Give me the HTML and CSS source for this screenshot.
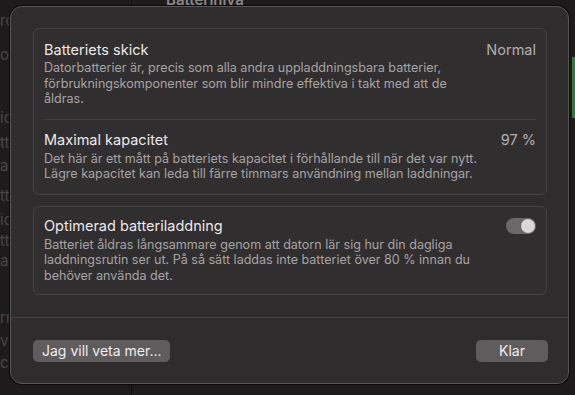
FILE: index.html
```html
<!DOCTYPE html>
<html lang="sv">
  <head>
    <meta charset="UTF-8" />
    <meta name="viewport" content="width=device-width, initial-scale=1.0" />
    <title>Batterihälsa</title>
    <link rel="stylesheet" href="styles.css">
  </head>
  <body>
    <div class="backdrop">
      <aside class="sidebar">
        <span style="top: 11px">rc</span>
        <span style="top: 45px">o</span>
        <span style="top: 108px">ic</span>
        <span style="top: 133px">tt</span>
        <span style="top: 156px">a</span>
        <span style="top: 186px">tt</span>
        <span style="top: 210px">ic</span>
        <span style="top: 231px">tt</span>
        <span style="top: 251px">a</span>
        <span style="top: 308px">rn</span>
        <span style="top: 331px">v</span>
        <span style="top: 353px">ce</span>
      </aside>
      <div class="content">
        <div class="content-title">Batterinivå</div>
        <div class="level-bar"></div>
      </div>
    </div>

    <div class="sheet">
      <div class="sheet-body">
        <section class="card">
          <div class="row">
            <div class="row-head">
              <span class="row-title">Batteriets skick</span>
              <span class="row-value">Normal</span>
            </div>
            <p class="row-text">Datorbatterier är, precis som alla andra uppladdningsbara batterier, förbrukningskomponenter som blir mindre effektiva i takt med att de åldras.</p>
          </div>
          <div class="row">
            <div class="row-head">
              <span class="row-title">Maximal kapacitet</span>
              <span class="row-value">97 %</span>
            </div>
            <p class="row-text">Det här är ett mått på batteriets kapacitet i förhållande till när det var nytt. Lägre kapacitet kan leda till färre timmars användning mellan laddningar.</p>
          </div>
        </section>

        <section class="card">
          <div class="row">
            <div class="row-head">
              <span class="row-title">Optimerad batteriladdning</span>
              <span class="toggle on"><span class="knob"></span></span>
            </div>
            <p class="row-text">Batteriet åldras långsammare genom att datorn lär sig hur din dagliga laddningsrutin ser ut. På så sätt laddas inte batteriet över 80 % innan du behöver använda det.</p>
          </div>
        </section>
      </div>

      <footer class="sheet-footer">
        <button class="btn">Jag vill veta mer...</button>
        <button class="btn btn-wide">Klar</button>
      </footer>
    </div>
  </body>
</html>
```

FILE: styles.css
```css
html,
body {
  margin: 0;
  padding: 0;
  height: 100%;
}

body {
  background-color: #1d1b1c;
  color: #e6e4e5;
  font-family: Inter, "Noto Sans", sans-serif;
  overflow: hidden;
  position: relative;
}

/* Fönstret bakom arket */
.backdrop {
  display: flex;
  height: 100%;
}

.sidebar {
  width: 131px;
  border-right: 1px solid #0e0d0d;
  position: relative;
  font-size: 15px;
  color: #4a4748;
}

.sidebar span {
  position: absolute;
  left: 0;
}

.content {
  flex: 1;
  position: relative;
}

.content-title {
  margin: -10px 0 0 34px;
  font-size: 15px;
  font-weight: 600;
  color: #8a8788;
}

.level-bar {
  position: absolute;
  right: 0;
  top: 57px;
  width: 3px;
  height: 61px;
  background-color: #2f7a3a;
}

/* Arket */
.sheet {
  position: absolute;
  left: 10px;
  top: 6px;
  width: 557px;
  height: 376px;
  background-color: #2f2c2d;
  border: 1px solid #5a5758;
  border-radius: 12px;
  box-shadow: 0 0 0 1px #0b0a0a;
  display: flex;
  flex-direction: column;
}

.sheet-body {
  padding: 21px 21px 22px 22px;
  display: flex;
  flex-direction: column;
  gap: 11px;
  border-bottom: 1px solid #444142;
}

.card {
  border: 1px solid #454243;
  border-radius: 6px;
  background-color: #312e2f;
  padding: 0 10px;
}

.row {
  padding: 10px 0 12px;
}

.row + .row {
  border-top: 1px solid #444142;
}

.card:last-child .row {
  padding: 9px 0 11px;
}

.row-head {
  display: flex;
  justify-content: space-between;
  align-items: center;
  height: 20px;
}

.row-title {
  font-size: 14.5px;
  color: #ebe9ea;
}

.row-value {
  font-size: 14.5px;
  color: #b3b0b1;
}

.row-text {
  margin: 1px 0 0;
  max-width: 440px;
  font-size: 12.55px;
  line-height: 15.5px;
  color: #a7a4a5;
}

/* Reglage */
.toggle {
  width: 30px;
  height: 16px;
  border-radius: 8px;
  background-color: #6b6869;
  display: flex;
  align-items: center;
  justify-content: flex-end;
  padding: 0 1px;
  box-sizing: border-box;
}

.knob {
  width: 14px;
  height: 14px;
  border-radius: 50%;
  background-color: #d9d7d8;
}

/* Knappar */
.sheet-footer {
  flex: 1;
  display: flex;
  justify-content: space-between;
  align-items: center;
  padding: 0 20px 0 22px;
}

.btn {
  height: 22px;
  padding: 0 9px;
  font-family: inherit;
  font-size: 14px;
  color: #efedee;
  background-color: #5f5c5d;
  border: none;
  border-radius: 5px;
}

.btn-wide {
  width: 72px;
}
```
